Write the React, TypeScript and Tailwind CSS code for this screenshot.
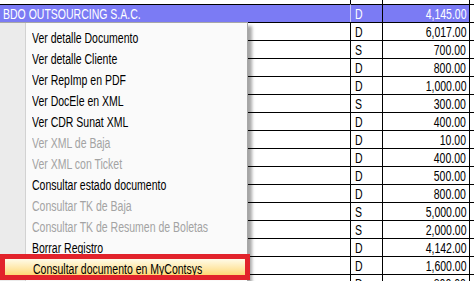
import type { ReactNode } from "react";

type Row = { name?: string; kind: string; amount: string; selected?: boolean };

const rows: Row[] = [
  { name: "BDO OUTSOURCING S.A.C.", kind: "D", amount: "4,145.00", selected: true },
  { kind: "D", amount: "6,017.00" },
  { kind: "S", amount: "700.00" },
  { kind: "D", amount: "800.00" },
  { kind: "D", amount: "1,000.00" },
  { kind: "S", amount: "300.00" },
  { kind: "D", amount: "400.00" },
  { kind: "D", amount: "10.00" },
  { kind: "D", amount: "400.00" },
  { kind: "D", amount: "500.00" },
  { kind: "D", amount: "800.00" },
  { kind: "S", amount: "5,000.00" },
  { kind: "S", amount: "2,000.00" },
  { kind: "D", amount: "4,142.00" },
  { kind: "D", amount: "1,600.00" },
  { kind: "D", amount: "800.00" },
];

type MenuItem = { label: ReactNode; disabled?: boolean; active?: boolean };

const menu: MenuItem[] = [
  { label: "Ver detalle Documento" },
  { label: "Ver detalle Cliente" },
  { label: "Ver RepImp en PDF" },
  { label: "Ver DocEle en XML" },
  { label: "Ver CDR Sunat XML" },
  { label: "Ver XML de Baja", disabled: true },
  { label: "Ver XML con Ticket", disabled: true },
  { label: "Consultar estado documento" },
  { label: "Consultar TK de Baja", disabled: true },
  { label: "Consultar TK de Resumen de Boletas", disabled: true },
  { label: "Borrar Registro" },
  {
    label: (
      <>
        Consultar documento en <span className="underline underline-offset-2">M</span>yContsys
      </>
    ),
    active: true,
  },
];

// narrow "XP" look: text is rendered tall and squeezed horizontally
function Txt({ children, right }: { children: ReactNode; right?: boolean }) {
  return (
    <span
      className={`inline-block whitespace-nowrap scale-x-[0.75] ${
        right ? "origin-right" : "origin-left"
      }`}
    >
      {children}
    </span>
  );
}

export default function App() {
  return (
    <div
      className="relative h-[281px] w-[474px] overflow-hidden bg-white text-[14px] leading-none text-black"
      style={{ fontFamily: '"Liberation Sans", Arial, sans-serif' }}
    >
      {/* grid */}
      <div className="grid grid-cols-[351px_32px_87px_1fr]">
        <div className="h-[4px] border-r border-black" />
        <div className="h-[4px] border-r border-black" />
        <div className="h-[4px] border-r border-black" />
        <div className="h-[4px]" />
        {rows.map((r, i) => {
          const cell = `flex h-[18px] items-center border-t border-black ${
            r.selected ? "bg-[#7b7bf4] text-white" : ""
          }`;
          return (
            <div key={i} className="contents">
              <div className={`${cell} border-r pl-[3px] ${r.selected ? "border-r-[#c8c8f8]" : ""}`}>
                {r.name && <Txt>{r.name}</Txt>}
              </div>
              <div className={`${cell} border-r pl-[4px]`}>
                <Txt>{r.kind}</Txt>
              </div>
              <div className={`${cell} justify-end border-r pr-[3px]`}>
                <Txt right>{r.amount}</Txt>
              </div>
              <div className="h-[18px] border-t border-black" />
            </div>
          );
        })}
      </div>

      {/* context menu */}
      <div className="absolute left-0 top-[22px] flex w-[248px] border-r border-t border-[#a7a7a7] bg-[#fafafa] shadow-[4px_4px_3px_rgba(0,0,0,0.35)]">
        <div className="w-[26px] shrink-0 border-r border-[#d2d2d2] bg-[#ebebeb]" />
        <div className="flex min-w-0 flex-1 flex-col pt-[4px] pb-[4px]">
          {menu.map((m, i) => (
            <div
              key={i}
              className={`flex h-[21px] min-w-0 items-center pl-[6px] ${
                m.disabled ? "text-[#a3a3a3]" : ""
              } ${
                m.active
                  ? "-ml-[27px] pl-[33px] rounded-[3px] border border-[#f3d98a] bg-gradient-to-b from-[#fffbe8] to-[#ffd257]"
                  : ""
              }`}
            >
              <Txt>{m.label}</Txt>
            </div>
          ))}
        </div>
      </div>

      {/* red annotation box */}
      <div className="absolute left-0 top-[254px] h-[26px] w-[250px] border-[5px] border-[#e2232b]" />
    </div>
  );
}
